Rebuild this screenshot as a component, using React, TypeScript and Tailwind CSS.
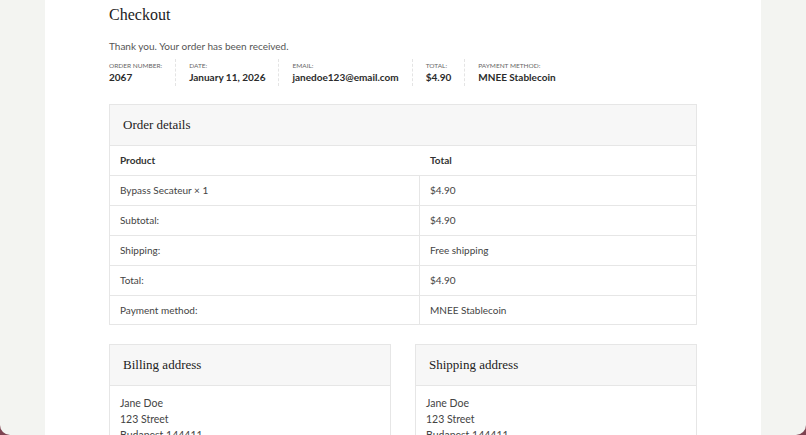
const sans = "font-['Lato','DejaVu_Sans',sans-serif]";
const serif = "font-['Liberation_Serif','DejaVu_Serif',serif]";

const overview = [
  { label: 'Order number:', value: '2067' },
  { label: 'Date:', value: 'January 11, 2026' },
  { label: 'Email:', value: 'janedoe123@email.com' },
  { label: 'Total:', value: '$4.90' },
  { label: 'Payment method:', value: 'MNEE Stablecoin' },
];

const rows = [
  ['Bypass Secateur × 1', '$4.90'],
  ['Subtotal:', '$4.90'],
  ['Shipping:', 'Free shipping'],
  ['Total:', '$4.90'],
  ['Payment method:', 'MNEE Stablecoin'],
];

function AddressBox({ title }: { title: string }) {
  return (
    <div className="flex-1 border border-[#e6e6e6]">
      <div className="h-[41px] flex items-center px-[13px] bg-[#f7f7f7] border-b border-[#e6e6e6]">
        <h2 className={`${serif} text-[13px] text-[#222]`}>{title}</h2>
      </div>
      <div className="px-[10px] pt-[9px] text-[10.5px] leading-[16px] text-[#444]">
        <p>Jane Doe</p>
        <p>123 Street</p>
        <p>Budapest 144411</p>
        <p>Hungary</p>
      </div>
    </div>
  );
}

export default function App() {
  return (
    <div className={`h-[435px] overflow-hidden bg-[#7d4351] ${sans}`}>
      <div className="h-full bg-[#f3f4f1] rounded-b-[10px] px-[45px]">
        <div className="h-full bg-white px-[64px] pt-[5px]">
          <h1 className={`${serif} text-[16px] leading-[20px] text-[#222]`}>Checkout</h1>

          <p className="mt-[14px] text-[10px] leading-[14px] text-[#555]">
            Thank you. Your order has been received.
          </p>

          <ul className="mt-[6px] flex">
            {overview.map((item, i) => (
              <li
                key={item.label}
                className={`py-[2px] pr-[13px] ${i > 0 ? 'pl-[13px] border-l border-dashed border-[#e4e4e4]' : ''}`}
              >
                <div className="text-[6.5px] leading-[9px] uppercase text-[#666]">{item.label}</div>
                <div className="text-[10px] leading-[14px] font-bold text-[#2b2b2b]">{item.value}</div>
              </li>
            ))}
          </ul>

          <section className="mt-[18px] border border-[#e6e6e6]">
            <div className="h-[41px] flex items-center px-[13px] bg-[#f7f7f7] border-b border-[#e6e6e6]">
              <h2 className={`${serif} text-[13px] text-[#222]`}>Order details</h2>
            </div>
            <div className="h-[30px] flex items-center px-[10px] border-b border-[#e6e6e6] text-[10px] font-bold text-[#333]">
              <span className="w-[310px]">Product</span>
              <span>Total</span>
            </div>
            {rows.map(([a, b], i) => (
              <div
                key={a}
                className={`flex text-[10px] text-[#444] ${i < rows.length - 1 ? 'h-[30px] border-b border-[#e6e6e6]' : 'h-[28px]'}`}
              >
                <div className="w-[310px] flex items-center px-[10px] border-r border-[#e6e6e6]">{a}</div>
                <div className="flex-1 flex items-center px-[10px]">{b}</div>
              </div>
            ))}
          </section>

          <div className="mt-[19px] flex gap-[24px]">
            <AddressBox title="Billing address" />
            <AddressBox title="Shipping address" />
          </div>
        </div>
      </div>
    </div>
  );
}
